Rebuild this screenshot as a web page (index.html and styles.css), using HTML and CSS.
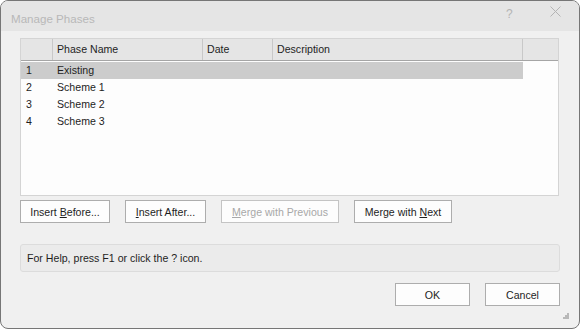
FILE: index.html
```html
<!DOCTYPE html>
<html lang="en">
<head>
    <meta charset="UTF-8">
    <meta name="viewport" content="width=device-width, initial-scale=1.0">
    <title>Manage Phases</title>
    <link rel="stylesheet" href="styles.css">
</head>
<body>
    <div class="window">
        <div class="titlebar">
            <span class="title">Manage Phases</span>
            <span class="title-help">?</span>
            <svg class="title-close" width="11" height="11" viewBox="0 0 11 11">
                <path d="M0.5 0.5 L10.5 10.5 M10.5 0.5 L0.5 10.5" stroke="#b4b4b4" stroke-width="1" fill="none"/>
            </svg>
        </div>

        <div class="content">
            <div class="list">
                <div class="list-head">
                    <div class="col col-num"></div>
                    <div class="col col-name">Phase Name</div>
                    <div class="col col-date">Date</div>
                    <div class="col col-desc">Description</div>
                    <div class="col col-fill"></div>
                </div>
                <div class="row selected">
                    <div class="cell col-num">1</div>
                    <div class="cell col-name">Existing</div>
                    <div class="cell col-date"></div>
                    <div class="cell col-desc"></div>
                </div>
                <div class="row">
                    <div class="cell col-num">2</div>
                    <div class="cell col-name">Scheme 1</div>
                    <div class="cell col-date"></div>
                    <div class="cell col-desc"></div>
                </div>
                <div class="row">
                    <div class="cell col-num">3</div>
                    <div class="cell col-name">Scheme 2</div>
                    <div class="cell col-date"></div>
                    <div class="cell col-desc"></div>
                </div>
                <div class="row">
                    <div class="cell col-num">4</div>
                    <div class="cell col-name">Scheme 3</div>
                    <div class="cell col-date"></div>
                    <div class="cell col-desc"></div>
                </div>
            </div>

            <div class="actions">
                <button class="btn btn-before">Insert <u>B</u>efore...</button>
                <button class="btn btn-after"><u>I</u>nsert After...</button>
                <button class="btn btn-prev" disabled><u>M</u>erge with Previous</button>
                <button class="btn btn-next">Merge with <u>N</u>ext</button>
            </div>

            <div class="help">For Help, press F1 or click the ? icon.</div>

            <div class="footer">
                <button class="btn btn-dialog">OK</button>
                <button class="btn btn-dialog">Cancel</button>
            </div>
        </div>

        <svg class="grip" width="6" height="6" viewBox="0 0 6 6">
            <rect x="4" y="0" width="2" height="2" fill="#b8b8b8"/>
            <rect x="2" y="2" width="2" height="2" fill="#b8b8b8"/>
            <rect x="4" y="2" width="2" height="2" fill="#b8b8b8"/>
            <rect x="0" y="4" width="2" height="2" fill="#b8b8b8"/>
            <rect x="2" y="4" width="2" height="2" fill="#b8b8b8"/>
            <rect x="4" y="4" width="2" height="2" fill="#b8b8b8"/>
        </svg>
    </div>
</body>
</html>
```

FILE: styles.css
```css
html, body {
    margin: 0;
    padding: 0;
    background: #ffffff;
}
body {
    font-family: "Liberation Sans", Arial, sans-serif;
    font-size: 10.6px;
    color: #1e1e1e;
}

.window {
    position: relative;
    width: 580px;
    height: 329px;
    box-sizing: border-box;
    border: 1px solid #767676;
    border-radius: 8px;
    background: #f0f0f0;
    overflow: hidden;
}

/* Title bar (inactive) */
.titlebar {
    display: flex;
    align-items: center;
    height: 30px;
    background: #e5e5e5;
    padding-left: 10px;
}
.title {
    flex: 1;
    font-size: 11.6px;
    color: #b8b8b8;
    padding-top: 4px;
}
.title-help {
    width: 44px;
    color: #b4b4b4;
    font-size: 12px;
    margin-bottom: 5px;
}
.title-close {
    margin-right: 18px;
    margin-bottom: 10px;
}

.content {
    padding: 7px 19px 0 19px;
}

/* Phase list */
.list {
    height: 158px;
    box-sizing: border-box;
    margin-right: 1px;
    border: 1px solid #d4d4d4;
    background: #fdfdfd;
}
.list-head {
    display: flex;
    height: 22px;
    box-sizing: border-box;
    background: #e5e5e5;
    border-bottom: 1px solid #a5a5a5;
}
.col {
    box-sizing: border-box;
    padding-left: 4px;
    line-height: 21px;
    border-right: 1px solid #c8c8c8;
}
.col-num { width: 32px; }
.col-name { width: 150px; }
.col-date { width: 70px; }
.col-desc { width: 250px; }
.col-fill { flex: 1; border-right: none; }

.row {
    display: flex;
    height: 17px;
    margin-top: 1px;
    width: 502px;
}
.row + .row { margin-top: 0; }
.row.selected { background: #cccccc; }
.cell {
    box-sizing: border-box;
    padding-left: 4px;
    line-height: 17px;
}
.cell.col-num { padding-left: 5px; }

/* Buttons */
.btn {
    font-family: inherit;
    font-size: 10.6px;
    color: #1e1e1e;
    height: 23px;
    margin: 0;
    padding: 0;
    box-sizing: border-box;
    border: 1px solid #adadad;
    background: #fdfdfd;
    border-radius: 0;
}
.btn:disabled {
    color: #a8a8a8;
    border-color: #c4c4c4;
}
.actions {
    display: flex;
    gap: 15px;
    margin-top: 4px;
}
.btn-before { width: 90px; }
.btn-after { width: 81px; }
.btn-prev { width: 118px; }
.btn-next { width: 98px; }

.help {
    margin-top: 21px;
    height: 28px;
    box-sizing: border-box;
    border: 1px solid #dcdcdc;
    border-radius: 3px;
    background: #ebebeb;
    padding-left: 6px;
    line-height: 26px;
}

.footer {
    display: flex;
    justify-content: flex-end;
    gap: 15px;
    margin-top: 11px;
}
.btn-dialog { width: 75px; }

/* Resize grip over the corner */
.grip {
    position: absolute;
    right: 10px;
    bottom: 9px;
}
```
